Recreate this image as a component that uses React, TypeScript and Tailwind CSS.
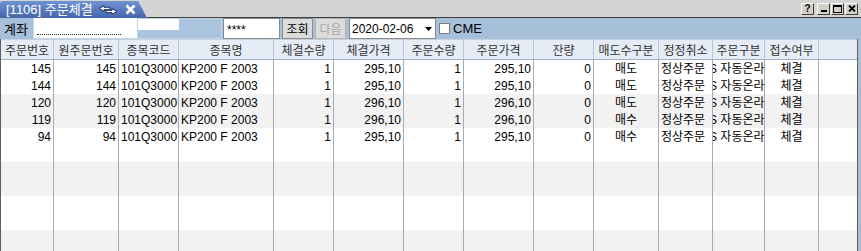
import React from 'react';

type Col = { label: string; w: number; align: 'left' | 'right' | 'center' };

const cols: Col[] = [
  { label: '주문번호', w: 53, align: 'right' },
  { label: '원주문번호', w: 65, align: 'right' },
  { label: '종목코드', w: 60, align: 'left' },
  { label: '종목명', w: 95, align: 'left' },
  { label: '체결수량', w: 60, align: 'right' },
  { label: '체결가격', w: 70, align: 'right' },
  { label: '주문수량', w: 60, align: 'right' },
  { label: '주문가격', w: 70, align: 'right' },
  { label: '잔량', w: 60, align: 'right' },
  { label: '매도수구분', w: 65, align: 'center' },
  { label: '정정취소', w: 54, align: 'left' },
  { label: '주문구분', w: 52, align: 'left' },
  { label: '접수여부', w: 54, align: 'center' },
  { label: '', w: 38, align: 'left' },
];

const rows: string[][] = [
  ['145', '145', '101Q3000', 'KP200 F 2003', '1', '295,10', '1', '295,10', '0', '매도', '정상주문', 'S 자동온라인', '체결', ''],
  ['144', '144', '101Q3000', 'KP200 F 2003', '1', '295,10', '1', '295,10', '0', '매도', '정상주문', 'S 자동온라인', '체결', ''],
  ['120', '120', '101Q3000', 'KP200 F 2003', '1', '296,10', '1', '296,10', '0', '매도', '정상주문', 'S 자동온라인', '체결', ''],
  ['119', '119', '101Q3000', 'KP200 F 2003', '1', '296,10', '1', '296,10', '0', '매수', '정상주문', 'S 자동온라인', '체결', ''],
  ['94', '94', '101Q3000', 'KP200 F 2003', '1', '295,10', '1', '295,10', '0', '매수', '정상주문', 'S 자동온라인', '체결', ''],
];

const FONT = '"Liberation Sans", "Noto Sans CJK KR", sans-serif';
const KR = '"Noto Sans CJK KR", sans-serif';

const WinButton: React.FC<{ children: React.ReactNode }> = ({ children }) => (
  <div className="w-[13px] h-[12px] bg-[#d4d0c8] border border-t-white border-l-white border-b-[#404040] border-r-[#404040] flex items-center justify-center">
    {children}
  </div>
);

const App: React.FC = () => {
  const blank = Array.from({ length: 7 }, () => cols.map(() => ''));
  const all = [...rows, ...blank];

  return (
    <div
      className="w-[861px] h-[251px] overflow-hidden bg-[#a6c0d9] flex flex-col text-[12px] text-black"
      style={{ fontFamily: FONT }}
    >
      {/* title bar */}
      <div className="h-[18px] flex bg-[#d4d4d4]">
        <div className="w-[147px] h-[17px] mt-[1px] rounded-tl-[3px] bg-gradient-to-b from-[#7093d4] to-[#4566ab] [clip-path:polygon(0_0,94%_0,100%_100%,0_100%)] flex items-center pl-[6px] text-white">
          <span className="leading-none text-[13px]">[1106] 주문체결</span>
          <svg width="20" height="10" viewBox="0 0 20 10" className="ml-[5px]">
            <path d="M1 3.5 L6 0.7 L6 2.3 L12 2.3 L12 4.7 L6 4.7 L6 6.3 Z" fill="#fff" stroke="#1c2f5e" strokeWidth="1" />
            <path d="M19 6.5 L14 3.7 L14 5.3 L8 5.3 L8 7.7 L14 7.7 L14 9.3 Z" fill="#fff" stroke="#1c2f5e" strokeWidth="1" />
          </svg>
          <svg width="11" height="11" viewBox="0 0 11 11" className="ml-[7px]">
            <path d="M1.5 1.5 L9.5 9.5 M9.5 1.5 L1.5 9.5" stroke="#fff" strokeWidth="2.6" />
          </svg>
        </div>
        <div className="flex-1 border-b border-[#3c3c3c] flex items-center justify-end gap-[1px] pr-[3px]">
          <WinButton>
            <span className="text-[10px] font-bold leading-none">?</span>
          </WinButton>
          <div className="w-[1px]" />
          <WinButton>
            <div className="w-[6px] h-[2px] bg-black mt-[5px]" />
          </WinButton>
          <WinButton>
            <div className="w-[9px] h-[8px] border border-black border-t-2" />
          </WinButton>
          <WinButton>
            <svg width="8" height="7" viewBox="0 0 8 7">
              <path d="M1 0.5 L7 6.5 M7 0.5 L1 6.5" stroke="#000" strokeWidth="1.8" />
            </svg>
          </WinButton>
        </div>
      </div>

      {/* toolbar */}
      <div className="h-[24px] flex items-center">
        <span className="ml-[4px] w-[29px] text-[13px]" style={{ fontFamily: KR }}>계좌</span>
        <div className="w-[104px] h-[21px] bg-white border-b border-l border-[#c9d6e4] flex items-end pb-[3px] pl-[3px]">
          <div className="w-[84px] border-b border-dotted border-[#333]" />
        </div>
        <div className="w-[85px] h-[21px] bg-[#aac4de] border border-[#c2d5e8] flex flex-col">
          <div className="w-[41px] h-[11px] bg-white" />
        </div>
        <div className="ml-[1px] w-[57px] h-[21px] bg-white border border-[#8a8a8a] flex items-center pl-[3px] pt-[3px]">
          ****
        </div>
        <div className="ml-[2px] w-[31px] h-[21px] bg-[#dcdcdc] border border-[#8c8c8c] flex items-center justify-center" style={{ fontFamily: KR }}>
          조회
        </div>
        <div className="ml-[2px] w-[31px] h-[21px] bg-[#dcdcdc] border border-[#b4b4b4] flex items-center justify-center text-[#a8a8a8]" style={{ fontFamily: KR }}>
          다음
        </div>
        <div className="ml-[3px] w-[87px] h-[21px] bg-white border border-[#8a8a8a] flex items-center pl-[2px]">
          <span>2020-02-06</span>
          <svg width="7" height="4" viewBox="0 0 7 4" className="ml-[12px]">
            <path d="M0 0 L7 0 L3.5 4 Z" fill="#000" />
          </svg>
        </div>
        <div className="ml-[3px] w-[11px] h-[11px] bg-white border border-[#7a7a7a]" />
        <span className="ml-[3px] text-[13px]">CME</span>
      </div>

      {/* grid */}
      <div className="w-[858px] flex-1 bg-white border-l border-r border-[#5e5e5e] flex flex-col">
        <div className="h-[21px] flex bg-[#e5ecf5] border-t border-[#c3d0e0] border-b border-b-[#9fb1c9] shrink-0">
          {cols.map((c, i) => (
            <div
              key={i}
              className={`h-full flex items-center justify-center whitespace-nowrap overflow-hidden text-[#333] ${i < cols.length - 1 ? 'border-r border-[#b7c6d9]' : ''}`}
              style={{ width: c.w, fontFamily: KR }}
            >
              {c.label}
            </div>
          ))}
        </div>
        {all.map((r, ri) => (
          <div
            key={ri}
            className={`h-[17px] flex shrink-0 ${Math.floor(ri / 2) % 2 === 1 ? 'bg-[#f2f2f2]' : 'bg-white'}`}
          >
            {cols.map((c, ci) => (
              <div
                key={ci}
                className={`h-full flex items-center whitespace-nowrap overflow-hidden ${ci < cols.length - 1 ? 'border-r border-[#a9a9b1]' : ''} ${
                  c.align === 'right' ? 'justify-end pr-[2px]' : c.align === 'center' ? 'justify-center' : 'justify-start pl-[2px]'
                }`}
                style={{ width: c.w }}
              >
                {ci === 11 && r[ci] ? <span className="ml-[-6px]">{r[ci]}</span> : r[ci]}
              </div>
            ))}
          </div>
        ))}
      </div>
    </div>
  );
};

export default App;
